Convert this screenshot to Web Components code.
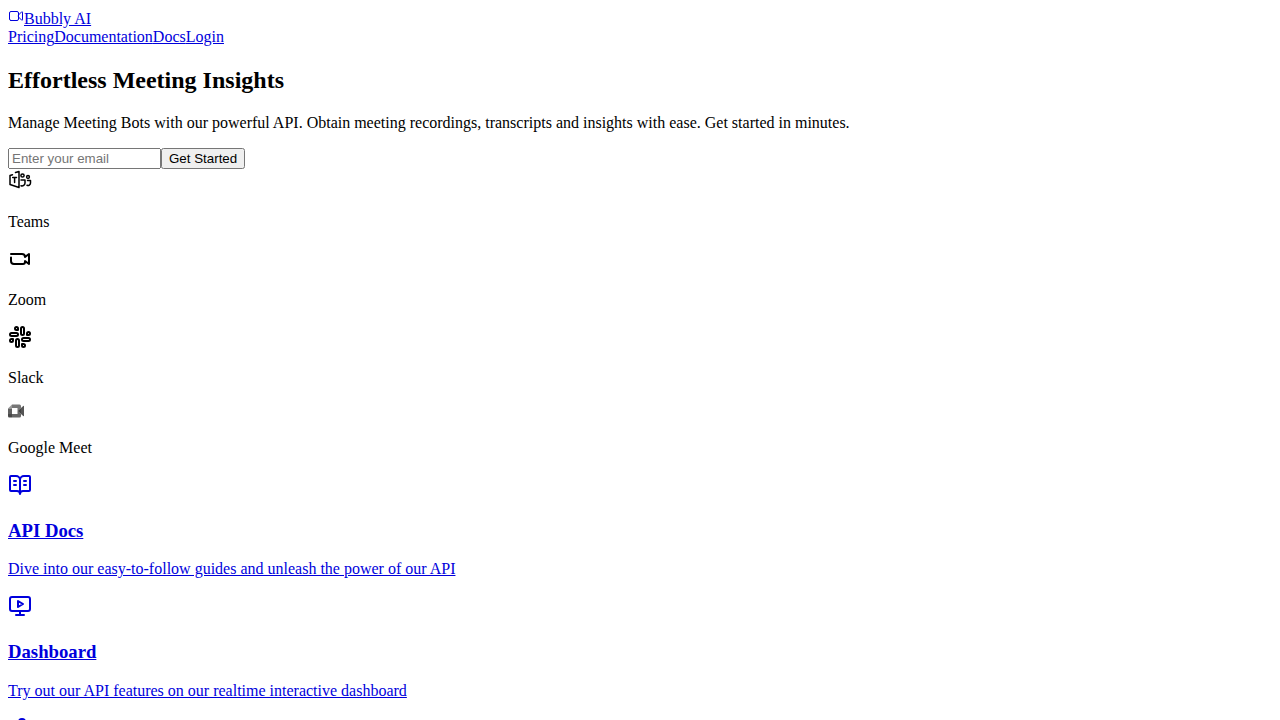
<!DOCTYPE html>
<html lang="en">
<head>
<meta charset="utf-8">
<title>Bubbly AI</title>
<style>
  body { --link: #0000dc; margin: 8px; font-family: "Liberation Serif", "Times New Roman", serif; font-size: 16px; background: #fff; color: #000; }
</style>
</head>
<body>
<site-header></site-header>
<hero-section></hero-section>
<main>
  <platform-item icon="teams">Teams</platform-item>
  <platform-item icon="zoom">Zoom</platform-item>
  <platform-item icon="slack">Slack</platform-item>
  <platform-item icon="meet">Google Meet</platform-item>
  <link-card icon="book"><span slot="title">API Docs</span>Dive into our easy-to-follow guides and unleash the power of our API</link-card>
  <link-card icon="monitor"><span slot="title">Dashboard</span>Try out our API features on our realtime interactive dashboard</link-card>
  <ui-icon name="puzzle" style="color:var(--link)"></ui-icon>
</main>
<script>
const line = (size, width, body) =>
  `<svg width="${size}" height="${size}" viewBox="0 0 24 24" fill="none" stroke="currentColor" stroke-width="${width}" stroke-linecap="round" stroke-linejoin="round" aria-hidden="true">${body}</svg>`;

const icons = {
  video: line(16, 1.5, '<path d="m15.75 10.5 4.72-4.72a.75.75 0 0 1 1.28.53v11.38a.75.75 0 0 1-1.28.53l-4.72-4.72M4.5 18.75h9a2.25 2.25 0 0 0 2.25-2.25v-9a2.25 2.25 0 0 0-2.25-2.25h-9A2.25 2.25 0 0 0 2.25 7.5v9a2.25 2.25 0 0 0 2.25 2.25Z"/>'),
  teams: line(24, 1.5, '<path d="M4.500 5.700 2 6.500v9l9 3V2.500L7.500 3.500M4.700 8.500h3.800M6.600 8.500v5"/><circle cx="14.500" cy="6.500" r="1.600"/><circle cx="20" cy="8" r="1.400"/><path d="M13 11h4v3a3 3 0 0 1-4 2.800M19.500 11.500h3V14a2.500 2.500 0 0 1-3.500 2.300"/>'),
  zoom: line(24, 2, '<path d="M3 7h11a3 3 0 0 1 3 3l4-3v10l-4-3v1a2 2 0 0 1-2 2H6a3 3 0 0 1-3-3v-3.500"/>'),
  slack: line(24, 2, '<rect width="3" height="8" x="13" y="2" rx="1.5"/><path d="M19 8.500V10h1.500A1.500 1.500 0 1 0 19 8.500"/><rect width="3" height="8" x="8" y="14" rx="1.5"/><path d="M5 15.500V14H3.500A1.500 1.500 0 1 0 5 15.500"/><rect width="8" height="3" x="14" y="13" rx="1.5"/><path d="M15.500 19H14v1.500a1.500 1.500 0 1 0 1.500-1.500"/><rect width="8" height="3" x="2" y="8" rx="1.5"/><path d="M8.500 5H10V3.500A1.500 1.500 0 1 0 8.500 5"/>'),
  meet: '<svg width="16" height="16" viewBox="0 0 16 16" aria-hidden="true"><path fill="#777" d="M4 1.500h7.500q1.500 0 1.500 1.500v2L9.500 8V5H4z"/><path fill="#999" d="M0 5.500 4 1.500v4z"/><path fill="#606060" d="M0 5.500h4v5.500H0z"/><path fill="#484848" d="M0 11h4v3.500H1.300Q0 14.500 0 13z"/><path fill="#666" d="M4 11h5.500V8l3.500 3v2q0 1.500-1.500 1.500H4z"/><path fill="#444" d="M9.500 8 13 5v6z"/><path fill="#555" d="m13 5 2.200-2q.8-.5.8.5v9q0 1-.8.500L13 11z"/></svg>',
  book: line(24, 2, '<path d="M12 7v14M16 12h2M16 8h2M3 18a1 1 0 0 1-1-1V4a1 1 0 0 1 1-1h5a4 4 0 0 1 4 4 4 4 0 0 1 4-4h5a1 1 0 0 1 1 1v13a1 1 0 0 1-1 1h-6a3 3 0 0 0-3 3 3 3 0 0 0-3-3zM6 12h2M6 8h2"/>'),
  monitor: line(24, 2, '<path d="m10 7 5 3-5 3Z"/><rect width="20" height="14" x="2" y="3" rx="2"/><path d="M12 17v4M8 21h8"/>'),
  puzzle: line(24, 2, '<path d="M11 6a3 3 0 0 1 6 0v3h4v12H3V9h8z"/>')
};

class UiIcon extends HTMLElement {
  connectedCallback() {
    this.attachShadow({ mode: 'open' }).innerHTML =
      `<style>:host{display:inline}</style>${icons[this.getAttribute('name')]}`;
  }
}

class SiteHeader extends HTMLElement {
  connectedCallback() {
    this.attachShadow({ mode: 'open' }).innerHTML = `
      <style>:host{display:block} a{color:var(--link)}</style>
      <header>
        <div><a href="#home"><ui-icon name="video"></ui-icon>Bubbly AI</a></div>
        <nav><a href="#pricing">Pricing</a><a href="#documentation">Documentation</a><a href="#docs">Docs</a><a href="#login">Login</a></nav>
      </header>`;
  }
}

class HeroSection extends HTMLElement {
  connectedCallback() {
    this.attachShadow({ mode: 'open' }).innerHTML = `
      <style>
        :host{display:block}
        h2{font-size:24px;line-height:28px;margin:20px 0}
        p{margin:16px 0}
        input,button{font-family:"Liberation Sans",Arial,sans-serif}
        input{box-sizing:border-box;width:153px}
      </style>
      <h2>Effortless Meeting Insights</h2>
      <p>Manage Meeting Bots with our powerful API. Obtain meeting recordings, transcripts and insights with ease. Get started in minutes.</p>
      <form><input type="email" placeholder="Enter your email" aria-label="Email"><button type="button">Get Started</button></form>`;
  }
}

class PlatformItem extends HTMLElement {
  connectedCallback() {
    this.attachShadow({ mode: 'open' }).innerHTML = `
      <style>:host{display:block} p{margin:16px 0}</style>
      <ui-icon name="${this.getAttribute('icon')}"></ui-icon><p><slot></slot></p>`;
  }
}

class LinkCard extends HTMLElement {
  connectedCallback() {
    this.attachShadow({ mode: 'open' }).innerHTML = `
      <style>:host{display:block} a{color:var(--link)} p{margin:16px 0}</style>
      <a href="#${this.getAttribute('icon')}"><ui-icon name="${this.getAttribute('icon')}"></ui-icon><h3><slot name="title"></slot></h3><p><slot></slot></p></a>`;
  }
}

customElements.define('ui-icon', UiIcon);
customElements.define('site-header', SiteHeader);
customElements.define('hero-section', HeroSection);
customElements.define('platform-item', PlatformItem);
customElements.define('link-card', LinkCard);
</script>
</body>
</html>
